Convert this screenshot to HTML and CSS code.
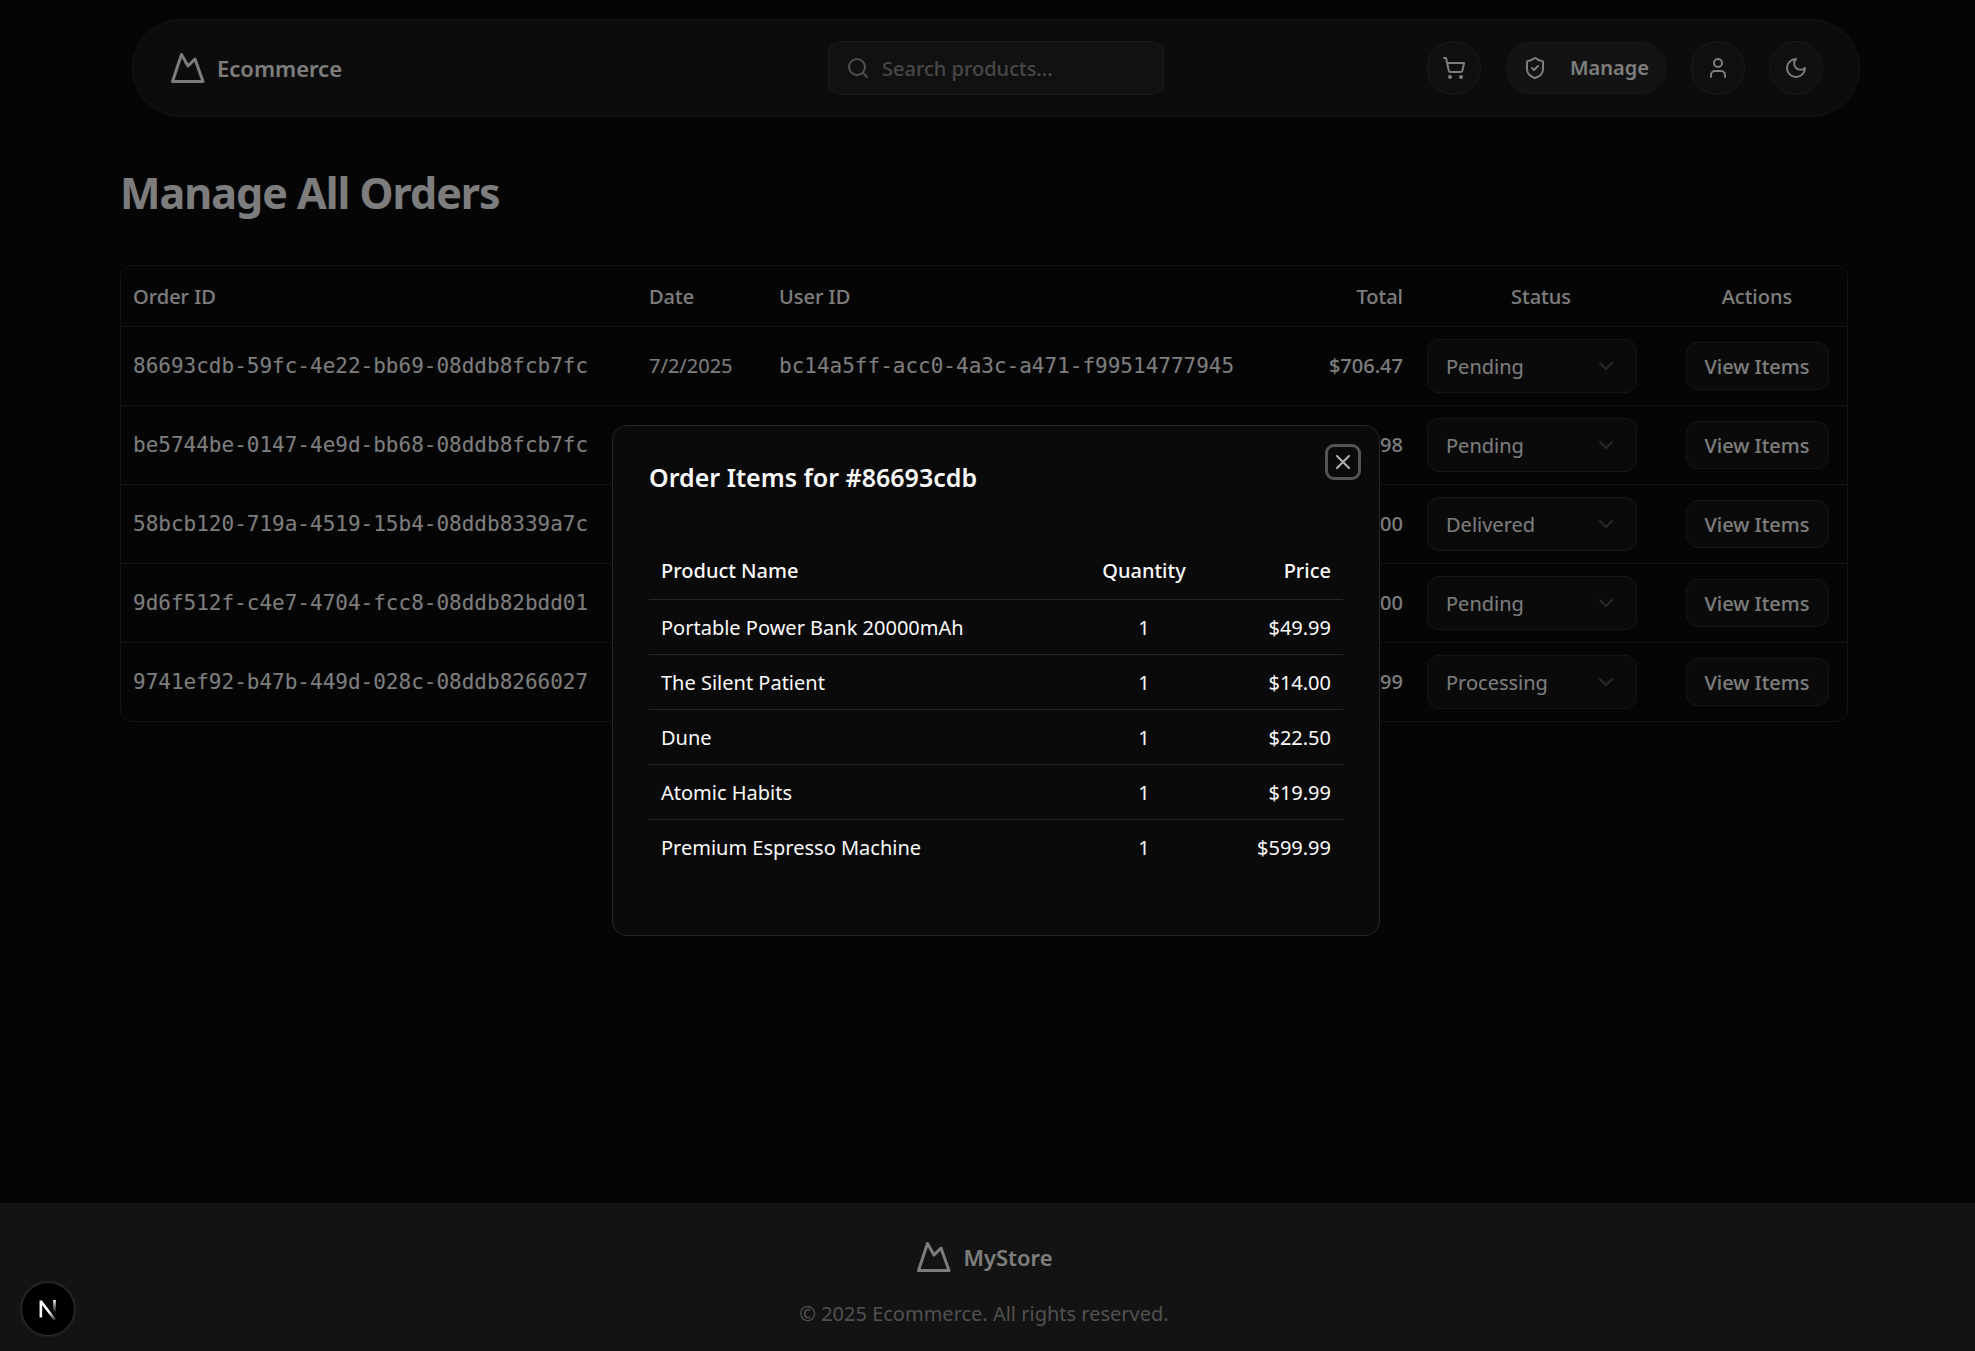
FILE: index.html
```html
<!DOCTYPE html>
<html lang="en">
<head>
<meta charset="utf-8">
<meta name="viewport" content="width=device-width, initial-scale=1">
<title>Manage All Orders</title>
<link rel="stylesheet" href="styles.css">
</head>
<body>
<svg class="sprite" aria-hidden="true">
  <symbol id="logo" viewBox="0 0 36 36"><path d="M3.5 31.5 12.5 4.5 19 16l7-7 8 22.500Z" fill="none" stroke="currentColor" stroke-width="3" stroke-linejoin="round"/></symbol>
  <symbol id="chevron" viewBox="0 0 24 24"><path d="m6 9 6 6 6-6"/></symbol>
</svg>

<header class="topbar">
  <nav class="nav">
    <a class="brand" href="#"><svg class="logo"><use href="#logo"/></svg>Ecommerce</a>
    <div class="search">
      <svg class="icon" viewBox="0 0 24 24"><circle cx="11" cy="11" r="8"/><path d="m21 21-4.300-4.300"/></svg>
      <input type="search" aria-label="Search products" placeholder="Search products...">
    </div>
    <div class="tools">
      <button class="round" aria-label="Cart"><svg class="icon" viewBox="0 0 24 24"><circle cx="8" cy="21" r="1"/><circle cx="19" cy="21" r="1"/><path d="M2.050 2.050h2l2.660 12.420a2 2 0 0 0 2 1.580h9.780a2 2 0 0 0 1.950-1.570l1.650-7.430H5.120"/></svg></button>
      <button class="manage"><svg class="icon" viewBox="0 0 24 24"><path d="M20 13c0 5-3.500 7.500-7.660 8.950a1 1 0 0 1-.67-.01C7.500 20.500 4 18 4 13V6a1 1 0 0 1 1-1c2 0 4.500-1.200 6.240-2.720a1.170 1.170 0 0 1 1.520 0C14.510 3.810 17 5 19 5a1 1 0 0 1 1 1z"/><path d="m9 12 2 2 4-4"/></svg>Manage</button>
      <button class="round" aria-label="Account"><svg class="icon" viewBox="0 0 24 24"><path d="M19 21v-2a4 4 0 0 0-4-4H9a4 4 0 0 0-4 4v2"/><circle cx="12" cy="7" r="4"/></svg></button>
      <button class="round" aria-label="Theme"><svg class="icon" viewBox="0 0 24 24"><path d="M12 3a6 6 0 0 0 9 9 9 9 0 1 1-9-9Z"/></svg></button>
    </div>
  </nav>
</header>

<main class="page">
  <h1>Manage All Orders</h1>
  <div class="card">
    <table class="orders">
      <colgroup><col class="c-id"><col class="c-date"><col class="c-id"><col><col class="c-status"><col class="c-actions"></colgroup>
      <thead><tr><th>Order ID</th><th>Date</th><th>User ID</th><th class="right">Total</th><th class="center">Status</th><th class="center">Actions</th></tr></thead>
      <tbody>
        <tr><td class="mono">86693cdb-59fc-4e22-bb69-08ddb8fcb7fc</td><td>7/2/2025</td><td class="mono">bc14a5ff-acc0-4a3c-a471-f99514777945</td><td class="right strong">$706.47</td>
          <td><div class="select"><select aria-label="Status"><option>Pending</option></select><svg class="icon"><use href="#chevron"/></svg></div></td><td class="center"><button class="view">View Items</button></td></tr>
        <tr><td class="mono">be5744be-0147-4e9d-bb68-08ddb8fcb7fc</td><td></td><td></td><td class="right strong">98</td>
          <td><div class="select"><select aria-label="Status"><option>Pending</option></select><svg class="icon"><use href="#chevron"/></svg></div></td><td class="center"><button class="view">View Items</button></td></tr>
        <tr><td class="mono">58bcb120-719a-4519-15b4-08ddb8339a7c</td><td></td><td></td><td class="right strong">00</td>
          <td><div class="select"><select aria-label="Status"><option>Delivered</option></select><svg class="icon"><use href="#chevron"/></svg></div></td><td class="center"><button class="view">View Items</button></td></tr>
        <tr><td class="mono">9d6f512f-c4e7-4704-fcc8-08ddb82bdd01</td><td></td><td></td><td class="right strong">00</td>
          <td><div class="select"><select aria-label="Status"><option>Pending</option></select><svg class="icon"><use href="#chevron"/></svg></div></td><td class="center"><button class="view">View Items</button></td></tr>
        <tr><td class="mono">9741ef92-b47b-449d-028c-08ddb8266027</td><td></td><td></td><td class="right strong">99</td>
          <td><div class="select"><select aria-label="Status"><option>Processing</option></select><svg class="icon"><use href="#chevron"/></svg></div></td><td class="center"><button class="view">View Items</button></td></tr>
      </tbody>
    </table>
  </div>
</main>

<footer class="footer">
  <a class="brand" href="#"><svg class="logo"><use href="#logo"/></svg>MyStore</a>
  <p>© 2025 Ecommerce. All rights reserved.</p>
</footer>

<div class="overlay">
  <section class="dialog" role="dialog" aria-modal="true" aria-labelledby="dialog-title">
    <h2 id="dialog-title">Order Items for #86693cdb</h2>
    <button class="close" aria-label="Close"><svg class="icon" viewBox="0 0 24 24"><path d="M18 6 6 18M6 6l12 12"/></svg></button>
    <table class="items">
      <colgroup><col><col class="c-qty"><col class="c-price"></colgroup>
      <thead><tr><th>Product Name</th><th class="center">Quantity</th><th class="right">Price</th></tr></thead>
      <tbody>
        <tr><td>Portable Power Bank 20000mAh</td><td class="center">1</td><td class="right">$49.99</td></tr>
        <tr><td>The Silent Patient</td><td class="center">1</td><td class="right">$14.00</td></tr>
        <tr><td>Dune</td><td class="center">1</td><td class="right">$22.50</td></tr>
        <tr><td>Atomic Habits</td><td class="center">1</td><td class="right">$19.99</td></tr>
        <tr><td>Premium Espresso Machine</td><td class="center">1</td><td class="right">$599.99</td></tr>
      </tbody>
    </table>
  </section>
</div>

<button class="devtools" aria-label="Open developer tools">
  <svg viewBox="0 0 40 40" width="52" height="52" fill="none">
    <defs>
      <linearGradient id="fade-bar" x1="0" y1="13" x2="0" y2="23" gradientUnits="userSpaceOnUse"><stop stop-color="#fff"/><stop offset="1" stop-color="#fff" stop-opacity="0"/></linearGradient>
      <linearGradient id="fade-diag" x1="21" y1="22" x2="27" y2="29" gradientUnits="userSpaceOnUse"><stop stop-color="#fff"/><stop offset="1" stop-color="#fff" stop-opacity="0"/></linearGradient>
    </defs>
    <path d="M14.500 14 25.500 28.500" stroke="url(#fade-diag)" stroke-width="2"/>
    <path d="M14.500 26.500V13.500" stroke="#fff" stroke-width="2"/>
    <path d="M24.500 13.500h1V22h-1z" stroke="url(#fade-bar)" stroke-width="1"/>
  </svg>
</button>
</body>
</html>
```
FILE: styles.css
```css
:root {
  --bg: #0a0a0a;
  --fg: #fafafa;
  --muted: #a1a1a1;
  --line: #262626;
}

* { box-sizing: border-box; }

body {
  margin: 0;
  min-height: 100vh;
  display: flex;
  flex-direction: column;
  background: var(--bg);
  color: var(--fg);
  font: 400 20px/30px "Segoe UI", "Noto Sans", "Open Sans", sans-serif;
}

.sprite { position: absolute; width: 0; height: 0; }

button, input, select { font: inherit; color: inherit; }

button { cursor: pointer; }

.icon {
  flex: none;
  width: 24px;
  height: 24px;
  fill: none;
  stroke: currentColor;
  stroke-width: 2;
  stroke-linecap: round;
  stroke-linejoin: round;
}

/* Header */
.topbar { padding: 19px 24px 0 41px; }

.nav {
  display: grid;
  grid-template-columns: 1fr 336px 1fr;
  align-items: center;
  max-width: 1728px;
  height: 98px;
  margin: 0 auto;
  padding: 0 36px;
  border: 1px solid #2a2a2a;
  border-radius: 49px;
  background: #181818;
}

.brand {
  display: flex;
  align-items: center;
  gap: 12px;
  color: inherit;
  font-size: 22px;
  font-weight: 600;
  text-decoration: none;
}

.logo { width: 36px; height: 36px; }

.search {
  display: flex;
  align-items: center;
  gap: 12px;
  height: 54px;
  padding: 0 17px;
  border: 1px solid #363636;
  border-radius: 12px;
  background: #222;
  color: var(--muted);
}

.search input {
  flex: 1;
  min-width: 0;
  padding: 2px 0 0;
  border: 0;
  outline: 0;
  background: none;
  font-weight: 500;
}

.search input::placeholder { color: #8f8f8f; opacity: 1; }

.tools { display: flex; justify-content: flex-end; gap: 24px; }

.round {
  display: grid;
  place-items: center;
  width: 54px;
  height: 54px;
  padding: 0;
  border: 1px solid #363636;
  border-radius: 50%;
  background: #202020;
}

.manage {
  display: flex;
  align-items: center;
  gap: 23px;
  height: 54px;
  padding: 0 18px;
  border: 0;
  border-radius: 27px;
  background: #262626;
  font-weight: 600;
}

/* Orders */
.page { flex: 1; padding: 46px 31px 0 24px; }

.page > * { max-width: 1728px; margin-inline: auto; }

h1 {
  margin-block: 0 42px;
  font-size: 43px;
  line-height: 60px;
  letter-spacing: -1px;
}

.card {
  border: 1px solid var(--line);
  border-radius: 12px;
}

table { width: 100%; border-collapse: collapse; table-layout: fixed; }

th, td { padding: 0 12px; text-align: left; white-space: nowrap; }

th { height: 60px; padding-top: 3px; font-weight: 500; }

tr { border-bottom: 1px solid var(--line); }

tbody tr:last-child { border-bottom: 0; }

.right { text-align: right; }

.center { text-align: center; }

.strong { font-weight: 500; }

.mono { font-family: "DejaVu Sans Mono", "Liberation Mono", monospace; font-size: 21px; }

.orders td { height: 79px; }

.c-id { width: 516px; }
.c-date { width: 130px; }
.c-status { width: 252px; }
.c-actions { width: 180px; }

.select { display: grid; align-items: center; width: 210px; }

.select > * { grid-area: 1 / 1; }

.select select {
  height: 54px;
  padding: 2px 18px 0;
  border: 1px solid #2d2d2d;
  border-radius: 12px;
  appearance: none;
  background: #151515;
}

.select .icon {
  justify-self: end;
  margin-right: 19px;
  color: #505050;
  pointer-events: none;
}

.view {
  height: 48px;
  padding: 2px 18px 0;
  border: 1px solid #2d2d2d;
  border-radius: 12px;
  background: #151515;
  font-weight: 500;
}

/* Footer */
.footer {
  display: flex;
  flex-direction: column;
  align-items: center;
  gap: 24px;
  padding: 36px 7px 22px 0;
  background: #262626;
}

.footer p { margin: 0; color: var(--muted); }

/* Dialog */
.overlay {
  position: fixed;
  inset: 0;
  display: grid;
  place-items: center;
  padding: 9px 0 0 17px;
  background: rgb(0 0 0 / 50%);
}

.dialog {
  position: relative;
  width: 768px;
  max-width: 100%;
  padding: 36px 36px 60px;
  border: 1px solid var(--line);
  border-radius: 15px;
  background: var(--bg);
}

h2 {
  margin: 0 0 48px;
  font-size: 25px;
  font-weight: 600;
  line-height: 30px;
}

.items td { height: 55px; padding-top: 2px; }

.c-qty { width: 108px; }
.c-price { width: 145px; }

.close {
  position: absolute;
  top: 24px;
  right: 24px;
  width: 24px;
  height: 24px;
  padding: 0;
  border: 0;
  border-radius: 3px;
  outline: 3px solid #737373;
  outline-offset: 3px;
  background: none;
  opacity: .7;
}

.close .icon { display: block; }

.devtools {
  position: fixed;
  left: 22px;
  bottom: 16px;
  width: 52px;
  height: 52px;
  padding: 0;
  border: 0;
  border-radius: 50%;
  background: #000;
  box-shadow: 0 0 0 1px #2a2a2a, 0 0 3px 1px #333;
}

.devtools svg { display: block; }
```
